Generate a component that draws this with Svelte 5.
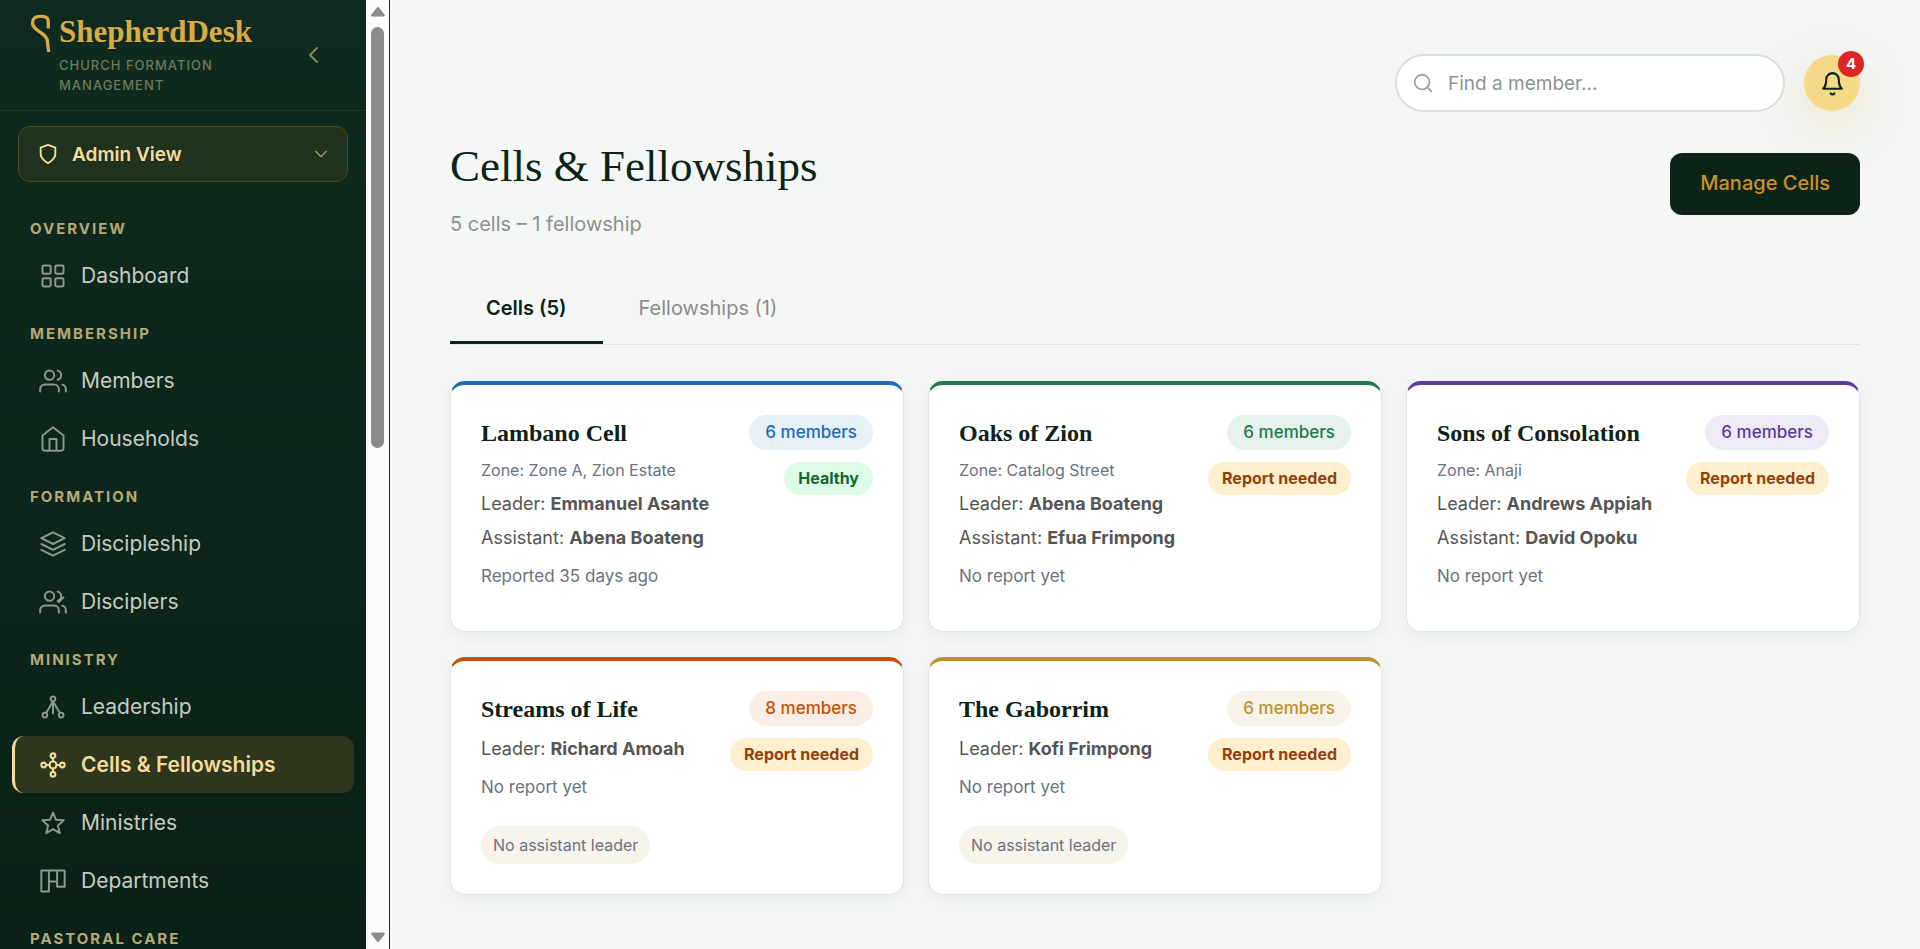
<script>
  const groups = [
    { label: 'Overview', items: [{ name: 'Dashboard', icon: 'grid' }] },
    {
      label: 'Membership',
      items: [
        { name: 'Members', icon: 'users' },
        { name: 'Households', icon: 'home' }
      ]
    },
    {
      label: 'Formation',
      items: [
        { name: 'Discipleship', icon: 'layers' },
        { name: 'Disciplers', icon: 'userscheck' }
      ]
    },
    {
      label: 'Ministry',
      items: [
        { name: 'Leadership', icon: 'tree' },
        { name: 'Cells & Fellowships', icon: 'hub' },
        { name: 'Ministries', icon: 'star' },
        { name: 'Departments', icon: 'columns' }
      ]
    },
    { label: 'Pastoral Care', items: [] }
  ];

  const icons = {
    grid: 'M4 3h5a1 1 0 0 1 1 1v5a1 1 0 0 1-1 1H4a1 1 0 0 1-1-1V4a1 1 0 0 1 1-1zM15 3h5a1 1 0 0 1 1 1v5a1 1 0 0 1-1 1h-5a1 1 0 0 1-1-1V4a1 1 0 0 1 1-1zM4 14h5a1 1 0 0 1 1 1v5a1 1 0 0 1-1 1H4a1 1 0 0 1-1-1v-5a1 1 0 0 1 1-1zM15 14h5a1 1 0 0 1 1 1v5a1 1 0 0 1-1 1h-5a1 1 0 0 1-1-1v-5a1 1 0 0 1 1-1z',
    users: 'M17 21v-2a4 4 0 0 0-4-4H5a4 4 0 0 0-4 4v2M13 7a4 4 0 1 1-8 0 4 4 0 0 1 8 0M23 21v-2a4 4 0 0 0-3-3.87M16 3.13a4 4 0 0 1 0 7.75',
    home: 'M3 9l9-7 9 7v11a2 2 0 0 1-2 2H5a2 2 0 0 1-2-2zM9 22V12h6v10',
    layers: 'M12 2L2 7l10 5 10-5zM2 17l10 5 10-5M2 12l10 5 10-5',
    userscheck: 'M17 21v-2a4 4 0 0 0-4-4H5a4 4 0 0 0-4 4v2M13 7a4 4 0 1 1-8 0 4 4 0 0 1 8 0M23 21v-2a4 4 0 0 0-3-3.87M16 3.13a4 4 0 0 1 0 7.75M16 11l1 1 4-4',
    tree: 'M14 5a2 2 0 1 1-4 0 2 2 0 0 1 4 0M7 19a2 2 0 1 1-4 0 2 2 0 0 1 4 0M21 19a2 2 0 1 1-4 0 2 2 0 0 1 4 0M12 7v10.500M12 7L6 17.300M12 7l6 10.300',
    hub: 'M15 12a3 3 0 1 1-6 0 3 3 0 0 1 6 0M14 4a2 2 0 1 1-4 0 2 2 0 0 1 4 0M14 20a2 2 0 1 1-4 0 2 2 0 0 1 4 0M6 12a2 2 0 1 1-4 0 2 2 0 0 1 4 0M22 12a2 2 0 1 1-4 0 2 2 0 0 1 4 0M12 6v3M12 15v3M6 12h3M15 12h3',
    star: 'M12 3l2.600 6.300 6.600.4-5 4.400 1.600 6.600-5.800-3.500-5.800 3.500 1.600-6.600-5-4.400 6.600-.4z',
    columns: 'M2 3h6.500v18H2zM8.500 3H15.500v9.500H8.500zM15.500 3H22v14h-6.500z'
  };

  const cells = [
    { name: 'Lambano Cell', zone: 'Zone A, Zion Estate', leader: 'Emmanuel Asante', assistant: 'Abena Boateng', report: 'Reported 35 days ago', members: 6, healthy: true, tone: 'blue' },
    { name: 'Oaks of Zion', zone: 'Catalog Street', leader: 'Abena Boateng', assistant: 'Efua Frimpong', report: 'No report yet', members: 6, healthy: false, tone: 'green' },
    { name: 'Sons of Consolation', zone: 'Anaji', leader: 'Andrews Appiah', assistant: 'David Opoku', report: 'No report yet', members: 6, healthy: false, tone: 'purple' },
    { name: 'Streams of Life', leader: 'Richard Amoah', report: 'No report yet', members: 8, healthy: false, tone: 'orange' },
    { name: 'The Gaborrim', leader: 'Kofi Frimpong', report: 'No report yet', members: 6, healthy: false, tone: 'gold' }
  ];

  let active = $state('Cells & Fellowships');
</script>

<div class="app">
  <aside class="sidebar">
    <div class="panel">
      <header class="brand">
        <svg class="crook" viewBox="0 0 22 38" aria-hidden="true">
          <path d="M18.300 14.500V8C18.300 3.500 15.500 2.300 10.500 2.300 5 2.300 2.500 4.500 2.500 9c0 8.500 15.200 9 15.200 20 0 4 .8 6 1 9" />
        </svg>
        <div class="brand-text">
          <span class="brand-name">ShepherdDesk</span>
          <span class="brand-sub">Church Formation Management</span>
        </div>
        <button class="collapse" type="button" aria-label="Collapse sidebar">
          <svg viewBox="0 0 24 24"><path d="M15 5l-7 7 7 7" /></svg>
        </button>
      </header>

      <div class="role">
        <svg class="shield" viewBox="0 0 24 24"><path d="M12 22s8-4 8-10V5l-8-3-8 3v7c0 6 8 10 8 10z" /></svg>
        <select aria-label="Current view">
          <option>Admin View</option>
        </select>
        <svg class="down" viewBox="0 0 24 24"><path d="M4 8l8 8 8-8" /></svg>
      </div>

      <nav>
        {#each groups as group}
          <h2>{group.label}</h2>
          {#each group.items as item}
            <a
              href="#{item.icon}"
              class:active={item.name === active}
              onclick={() => (active = item.name)}
            >
              <svg viewBox="0 0 24 24"><path d={icons[item.icon]} /></svg>
              <span>{item.name}</span>
            </a>
          {/each}
        {/each}
      </nav>
    </div>
    <div class="scroll" aria-hidden="true">
      <svg viewBox="0 0 14 11"><path d="M6 1.500a1.300 1.300 0 0 1 2 0l5.500 7c.7 1 .2 2-1 2h-11c-1.200 0-1.700-1-1-2z" /></svg>
      <div class="track"><div class="thumb"></div></div>
      <svg class="flip" viewBox="0 0 14 11"><path d="M6 1.500a1.300 1.300 0 0 1 2 0l5.500 7c.7 1 .2 2-1 2h-11c-1.200 0-1.700-1-1-2z" /></svg>
    </div>
  </aside>

  <main>
    <div class="tools">
      <label class="search">
        <svg viewBox="0 0 24 24"><circle cx="11" cy="11" r="8" /><path d="M21 21l-4.300-4.300" /></svg>
        <input type="text" placeholder="Find a member..." aria-label="Find a member" />
      </label>
      <button class="bell" type="button" aria-label="Notifications">
        <svg viewBox="0 0 24 24"><path d="M18 8A6 6 0 0 0 6 8c0 7-3 9-3 9h18s-3-2-3-9M13.730 21.500a2 2 0 0 1-3.460 0" /></svg>
        <span class="count">4</span>
      </button>
    </div>

    <div class="heading">
      <div>
        <h1>Cells &amp; Fellowships</h1>
        <p>5 cells – 1 fellowship</p>
      </div>
      <button class="manage" type="button">Manage Cells</button>
    </div>

    <div class="tabs" role="tablist">
      <button type="button" role="tab" aria-selected="true">Cells (5)</button>
      <button type="button" role="tab" aria-selected="false">Fellowships (1)</button>
    </div>

    <section class="cards">
      {#each cells as cell}
        <article class="card {cell.tone}">
          <div class="info">
            <h3>{cell.name}</h3>
            {#if cell.zone}<p class="zone">Zone: {cell.zone}</p>{/if}
            <p class="person">Leader: <strong>{cell.leader}</strong></p>
            {#if cell.assistant}<p class="person">Assistant: <strong>{cell.assistant}</strong></p>{/if}
            <p class="report">{cell.report}</p>
            {#if !cell.assistant}<span class="tag">No assistant leader</span>{/if}
          </div>
          <div class="badges">
            <span class="members">{cell.members} members</span>
            <span class="status" class:healthy={cell.healthy}>{cell.healthy ? 'Healthy' : 'Report needed'}</span>
          </div>
        </article>
      {/each}
    </section>
  </main>
</div>

<style>
  :global(body) {
    margin: 0;
    background: #f4f7f6;
  }
  .app {
    display: grid;
    grid-template-columns: 390px minmax(0, 1fr);
    height: 100vh;
    overflow: hidden;
    font-family: Inter, sans-serif;
    color: #0c2318;
  }
  h1, h2, h3, p {
    margin: 0;
  }
  button, select, input {
    font: inherit;
    color: inherit;
    border: 0;
    background: none;
    padding: 0;
    margin: 0;
  }
  button {
    cursor: pointer;
  }
  svg {
    display: block;
    flex: none;
    fill: none;
    stroke: currentColor;
    stroke-linecap: round;
    stroke-linejoin: round;
  }

  .sidebar {
    display: flex;
    min-height: 0;
    border-right: 1px solid #23361d;
  }
  .panel {
    flex: 1;
    min-width: 0;
    overflow: hidden;
    background: linear-gradient(#0f2a1e, #0b2117);
  }
  .brand {
    display: flex;
    align-items: flex-start;
    height: 111px;
    box-sizing: border-box;
    padding: 14px 40px 0 30px;
    border-bottom: 1px solid #243a1f;
  }
  .crook {
    width: 22px;
    height: 38px;
    color: #d9ab45;
    stroke-width: 3.3;
    stroke-linecap: butt;
  }
  .brand-text {
    display: flex;
    flex-direction: column;
    flex: 1;
    padding-left: 7px;
  }
  .brand-name {
    font: 700 31px/36px 'Liberation Serif', serif;
    color: #d9ab45;
  }
  .brand-sub {
    font-size: 13px;
    font-weight: 500;
    line-height: 20px;
    padding-top: 5px;
    width: 170px;
    letter-spacing: 1px;
    text-transform: uppercase;
    color: #6e7a58;
  }
  .collapse {
    padding: 29px 0 0;
    color: #84895f;
  }
  .collapse svg {
    width: 24px;
    height: 24px;
    stroke-width: 2;
  }
  .role {
    display: flex;
    align-items: center;
    gap: 13px;
    height: 56px;
    box-sizing: border-box;
    margin: 15px 18px 0;
    padding: 0 18px;
    border: 1px solid #50491f;
    border-radius: 12px;
    background: #20321d;
    color: #f4dc9c;
  }
  .role select {
    flex: 1;
    min-width: 0;
    appearance: none;
    font-size: 19px;
    font-weight: 600;
    outline: none;
  }
  .shield {
    width: 22px;
    height: 22px;
    stroke-width: 2;
  }
  .down {
    width: 16px;
    height: 16px;
    stroke-width: 2;
    color: #a89c6b;
  }
  nav {
    padding: 18px 12px 0;
  }
  nav h2 {
    padding: 19px 18px 8px;
    font-size: 15px;
    line-height: 20px;
    font-weight: 700;
    letter-spacing: 2px;
    text-transform: uppercase;
    color: #b5a975;
  }
  nav a {
    display: flex;
    align-items: center;
    gap: 14px;
    height: 57px;
    margin-bottom: 1px;
    box-sizing: border-box;
    padding-left: 24px;
    border-left: 3px solid transparent;
    border-radius: 12px;
    font-size: 21px;
    color: #c6cbc2;
    text-decoration: none;
  }
  nav svg {
    width: 28px;
    height: 28px;
    stroke-width: 1.7;
    color: #8b978f;
  }
  nav a.active {
    border-left-color: #f4dc9c;
    background: #2e371d;
    font-weight: 600;
    color: #f4dc9c;
  }
  nav a.active svg {
    color: inherit;
    stroke-width: 1.8;
  }

  .scroll {
    display: flex;
    flex-direction: column;
    align-items: center;
    gap: 10px;
    width: 23px;
    box-sizing: border-box;
    padding: 6px 0;
    background: #fcfcfc;
  }
  .scroll svg {
    width: 14px;
    height: 11px;
    fill: #8b8b8b;
    stroke: none;
  }
  .scroll .flip {
    transform: rotate(180deg);
  }
  .track {
    flex: 1;
    width: 13px;
  }
  .thumb {
    height: 47%;
    border-radius: 7px;
    background: #8b8b8b;
  }

  main {
    min-width: 0;
    padding: 54px 60px 0;
  }
  .tools {
    display: flex;
    justify-content: flex-end;
    align-items: center;
    gap: 19px;
  }
  .search {
    display: flex;
    align-items: center;
    gap: 14px;
    width: 390px;
    height: 58px;
    box-sizing: border-box;
    padding: 0 15px;
    border: 2px solid #dbdfdd;
    border-radius: 29px;
    background: #fff;
  }
  .search svg {
    width: 22px;
    height: 22px;
    stroke-width: 2;
    color: #9ca3af;
  }
  .search input {
    flex: 1;
    min-width: 0;
    font-size: 19px;
    outline: none;
  }
  .search input::placeholder {
    color: #8b9590;
    opacity: 1;
  }
  .bell {
    position: relative;
    display: grid;
    place-items: center;
    width: 56px;
    height: 56px;
    border-radius: 50%;
    background: #f6d986;
    box-shadow: 0 15px 45px rgba(212, 168, 67, 0.25);
  }
  .bell svg {
    width: 25px;
    height: 25px;
    stroke-width: 2;
  }
  .count {
    position: absolute;
    top: -4px;
    right: -4px;
    width: 26px;
    height: 26px;
    border-radius: 50%;
    background: #dc2626;
    color: #fff;
    font-size: 15px;
    font-weight: 700;
    line-height: 26px;
    text-align: center;
  }

  .heading {
    display: flex;
    justify-content: space-between;
    align-items: flex-start;
    padding-top: 25px;
  }
  h1 {
    font: 400 45px/58px 'Liberation Serif', serif;
  }
  .heading p {
    padding-top: 15px;
    font-size: 20px;
    line-height: 28px;
    color: #8a938e;
  }
  .manage {
    margin-top: 16px;
    padding: 15px 30px 17px;
    border-radius: 12px;
    background: #0c2318;
    color: #c9922a;
    font-size: 20px;
    line-height: 30px;
    font-weight: 500;
  }
  .tabs {
    display: flex;
    margin-top: 35px;
    border-bottom: 1px solid #e9e3d8;
  }
  .tabs button {
    padding: 21px 36px 19px;
    border-bottom: 3px solid transparent;
    font-size: 20px;
    line-height: 28px;
    color: #8c8c8c;
  }
  .tabs button[aria-selected='true'] {
    border-bottom-color: #0c2318;
    font-weight: 600;
    color: #0c2318;
  }

  .cards {
    display: grid;
    grid-template-columns: repeat(3, minmax(0, 1fr));
    gap: 25px 24px;
    padding-top: 36px;
  }
  .card {
    --tone: #1a6cb8;
    --tint: #e8f0f8;
    display: flex;
    justify-content: space-between;
    align-items: flex-start;
    padding: 30px 30px 29px;
    border: 1px solid #e9e4da;
    border-top: 4px solid var(--tone);
    border-radius: 15px;
    background: #fff;
    box-shadow: 0 4px 14px rgba(12, 35, 24, 0.05);
  }
  .green {
    --tone: #1c7c4c;
    --tint: #e8f1ed;
  }
  .purple {
    --tone: #5c3a9e;
    --tint: #efebf5;
  }
  .orange {
    --tone: #c84f04;
    --tint: #faeee7;
  }
  .gold {
    --tone: #bd922d;
    --tint: #f8f4ea;
  }
  .info {
    padding-bottom: 13px;
    white-space: nowrap;
  }
  h3 {
    margin-bottom: 8px;
    font: 700 24px/36px 'Liberation Serif', serif;
  }
  .zone {
    margin-bottom: 8px;
    font-size: 16px;
    line-height: 23px;
    color: #6b7280;
  }
  .person {
    margin-bottom: 6px;
    font-size: 18px;
    line-height: 28px;
    color: #555;
  }
  .report {
    padding-top: 5px;
    font-size: 17px;
    line-height: 26px;
    color: #6b7280;
  }
  .tag {
    display: block;
    width: max-content;
    margin: 26px 0 -12px;
    padding: 6px 12px;
    border-radius: 19px;
    background: #f7f3ed;
    font-size: 16px;
    line-height: 26px;
    color: #6b7280;
  }
  .badges {
    display: flex;
    flex-direction: column;
    align-items: flex-end;
    gap: 12px;
    white-space: nowrap;
  }
  .members {
    padding: 4px 16px;
    border-radius: 18px;
    background: var(--tint);
    color: var(--tone);
    font-size: 17px;
    line-height: 27px;
    font-weight: 500;
  }
  .status {
    padding: 4px 14px;
    border-radius: 17px;
    background: #fef0cc;
    color: #92400e;
    font-size: 16px;
    line-height: 25px;
    font-weight: 700;
  }
  .status.healthy {
    background: #dcfce7;
    color: #166534;
  }
</style>
